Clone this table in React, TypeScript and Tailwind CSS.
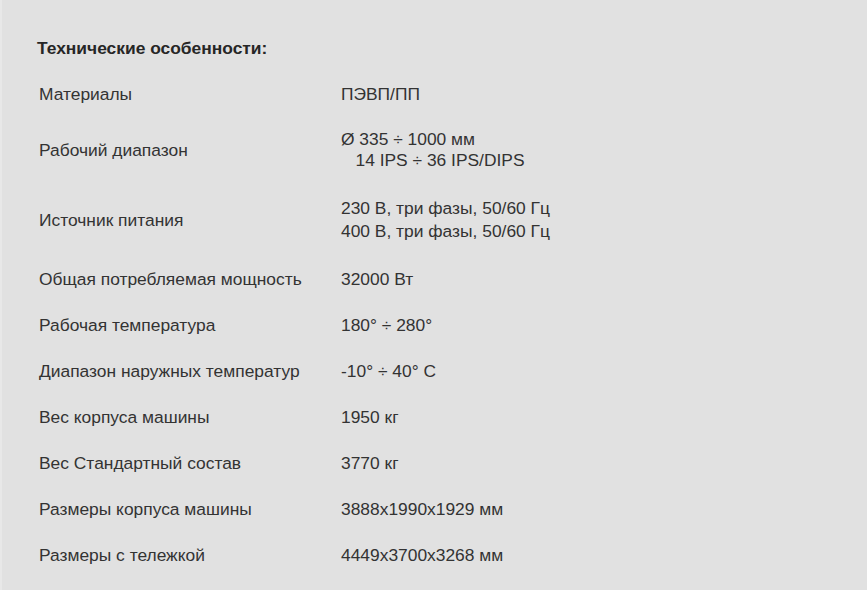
import React from "react";

type Row = { label: string; value: React.ReactNode; h: string };

const rows: Row[] = [
  { label: "Материалы", value: "ПЭВП/ПП", h: "h-[46px]" },
  {
    label: "Рабочий диапазон",
    value: (
      <div className="leading-[21px] whitespace-pre">
        <div>Ø 335 ÷ 1000 мм</div>
        <div>{"   14 IPS ÷ 36 IPS/DIPS"}</div>
      </div>
    ),
    h: "h-[66px]",
  },
  {
    label: "Источник питания",
    value: (
      <div className="leading-[23px]">
        <div>230 В, три фазы, 50/60 Гц</div>
        <div>400 В, три фазы, 50/60 Гц</div>
      </div>
    ),
    h: "h-[73px]",
  },
  { label: "Общая потребляемая мощность", value: "32000 Вт", h: "h-[46px]" },
  { label: "Рабочая температура", value: "180° ÷ 280°", h: "h-[46px]" },
  { label: "Диапазон наружных температур", value: "-10° ÷ 40° C", h: "h-[46px]" },
  { label: "Вес корпуса машины", value: "1950 кг", h: "h-[46px]" },
  { label: "Вес Стандартный состав", value: "3770 кг", h: "h-[46px]" },
  { label: "Размеры корпуса машины", value: "3888x1990x1929 мм", h: "h-[46px]" },
  { label: "Размеры с тележкой", value: "4449x3700x3268 мм", h: "h-[46px]" },
];

export default function App() {
  return (
    <div
      className="w-[867px] h-[590px] bg-[#e1e1e1] text-[#333333] overflow-hidden border-l-2 border-[#e8e8e8]"
      style={{ fontFamily: '"Liberation Sans", Arial, sans-serif' }}
    >
      <div className="pl-[35px] pt-[37px]">
        <div className="text-[17.4px] font-bold text-[#262626] leading-[22px] h-[34px]">
          Технические особенности:
        </div>
        <div className="flex flex-col text-[17.4px] leading-[22px]">
          {rows.map((r) => (
            <div key={r.label} className={`flex items-center ${r.h}`}>
              <div className="w-[304px] pl-[2px]">{r.label}</div>
              <div>{r.value}</div>
            </div>
          ))}
        </div>
      </div>
    </div>
  );
}
